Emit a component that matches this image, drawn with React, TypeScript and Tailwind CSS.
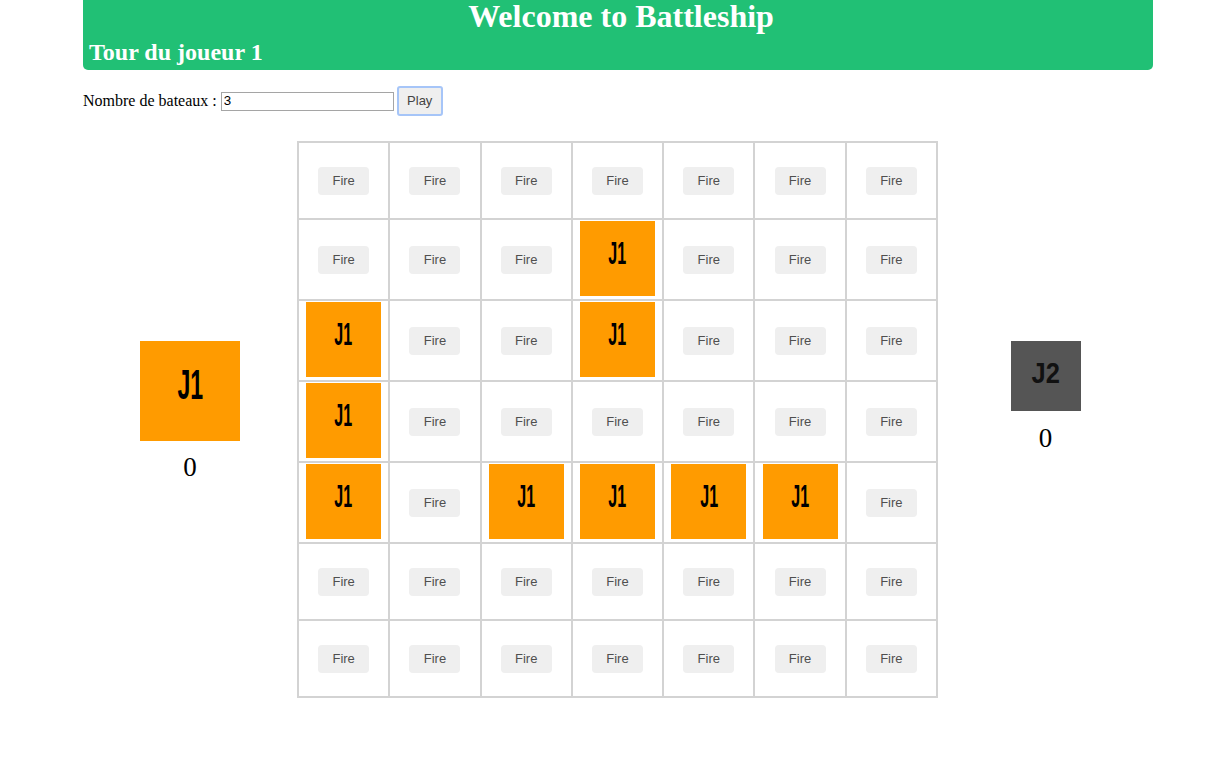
import React from 'react'

// 1 = a ship of player 1 already placed on that square
const BOARD: number[][] = [
  [0, 0, 0, 0, 0, 0, 0],
  [0, 0, 0, 1, 0, 0, 0],
  [1, 0, 0, 1, 0, 0, 0],
  [1, 0, 0, 0, 0, 0, 0],
  [1, 0, 1, 1, 1, 1, 0],
  [0, 0, 0, 0, 0, 0, 0],
  [0, 0, 0, 0, 0, 0, 0],
]

const serif = { fontFamily: '"Liberation Serif", "Times New Roman", serif' }
const sans = { fontFamily: '"Liberation Sans", Arial, sans-serif' }
const badgeFont = { fontFamily: '"Liberation Sans Narrow", "Liberation Sans", Arial, sans-serif' }

function ShipTile({ size = 'sm' }: { size?: 'sm' | 'lg' }) {
  if (size === 'lg') {
    return (
      <div className="w-[100px] h-[100px] bg-[#ff9b00] flex items-center justify-center">
        <span className="text-[42px] font-bold text-black scale-x-[0.55] -translate-y-[6px] leading-none" style={badgeFont}>
          J1
        </span>
      </div>
    )
  }
  return (
    <div className="w-[75px] h-[75px] bg-[#ff9b00] flex items-center justify-center">
      <span className="text-[31px] font-bold text-black scale-x-[0.52] -translate-y-[5px] leading-none" style={badgeFont}>
        J1
      </span>
    </div>
  )
}

function FireButton() {
  return (
    <button
      className="w-[51px] h-[28px] rounded-[4px] bg-[#efefef] text-[13px] text-[#4f4f4f]"
      style={sans}
    >
      Fire
    </button>
  )
}

export default function App() {
  return (
    <div className="w-[1232px] h-[771px] bg-white text-black" style={serif}>
      <div className="ml-[83px] w-[1070px]">
        {/* Header */}
        <div className="bg-[#21c075] rounded-b-[5px] pl-[6px] pb-[4px] text-white">
          <h1 className="text-[32px] leading-[32px] font-bold text-center">Welcome to Battleship</h1>
          <h2 className="mt-[6px] text-[24px] leading-[28px] font-bold">Tour du joueur 1</h2>
        </div>

        {/* Setup row */}
        <div className="mt-[16px] h-[30px] flex items-center text-[16px]">
          <span className="whitespace-pre">Nombre de bateaux : </span>
          <input
            defaultValue="3"
            className="w-[173px] h-[19px] border border-[#a5a5a5] px-[2px] text-[13.33px] outline-none"
            style={sans}
          />
          <button
            className="ml-[3px] w-[46px] h-[30px] rounded-[3px] border-2 border-[#a6c5f8] bg-[#efefef] text-[13px] text-[#444]"
            style={sans}
          >
            Play
          </button>
        </div>

        {/* Board with players */}
        <div className="mt-[25px] flex">
          <div className="w-[214px] flex flex-col items-center pt-[200px]">
            <ShipTile size="lg" />
            <div className="mt-[10px] text-[27px] leading-[32px]">0</div>
          </div>

          <div className="w-[641px] grid grid-cols-7 border-l-2 border-t-2 border-[#d3d3d3]">
            {BOARD.map((row, r) => {
              const tall = row.some((c) => c === 1)
              return row.map((cell, c) => (
                <div
                  key={`${r}-${c}`}
                  className={`border-r-2 border-b-2 border-[#d3d3d3] flex justify-center ${
                    tall ? 'h-[81px]' : 'h-[77px]'
                  } ${cell === 1 ? 'items-start pt-[1px]' : 'items-center'}`}
                >
                  {cell === 1 ? <ShipTile /> : <FireButton />}
                </div>
              ))
            })}
          </div>

          <div className="flex-1 flex flex-col items-center pt-[200px]">
            <div className="w-[70px] h-[70px] bg-[#555555] flex items-center justify-center">
              <span className="text-[30px] font-bold text-[#111] scale-x-[0.85] -translate-y-[3px] leading-none" style={badgeFont}>
                J2
              </span>
            </div>
            <div className="mt-[11px] text-[27px] leading-[32px]">0</div>
          </div>
        </div>
      </div>
    </div>
  )
}
